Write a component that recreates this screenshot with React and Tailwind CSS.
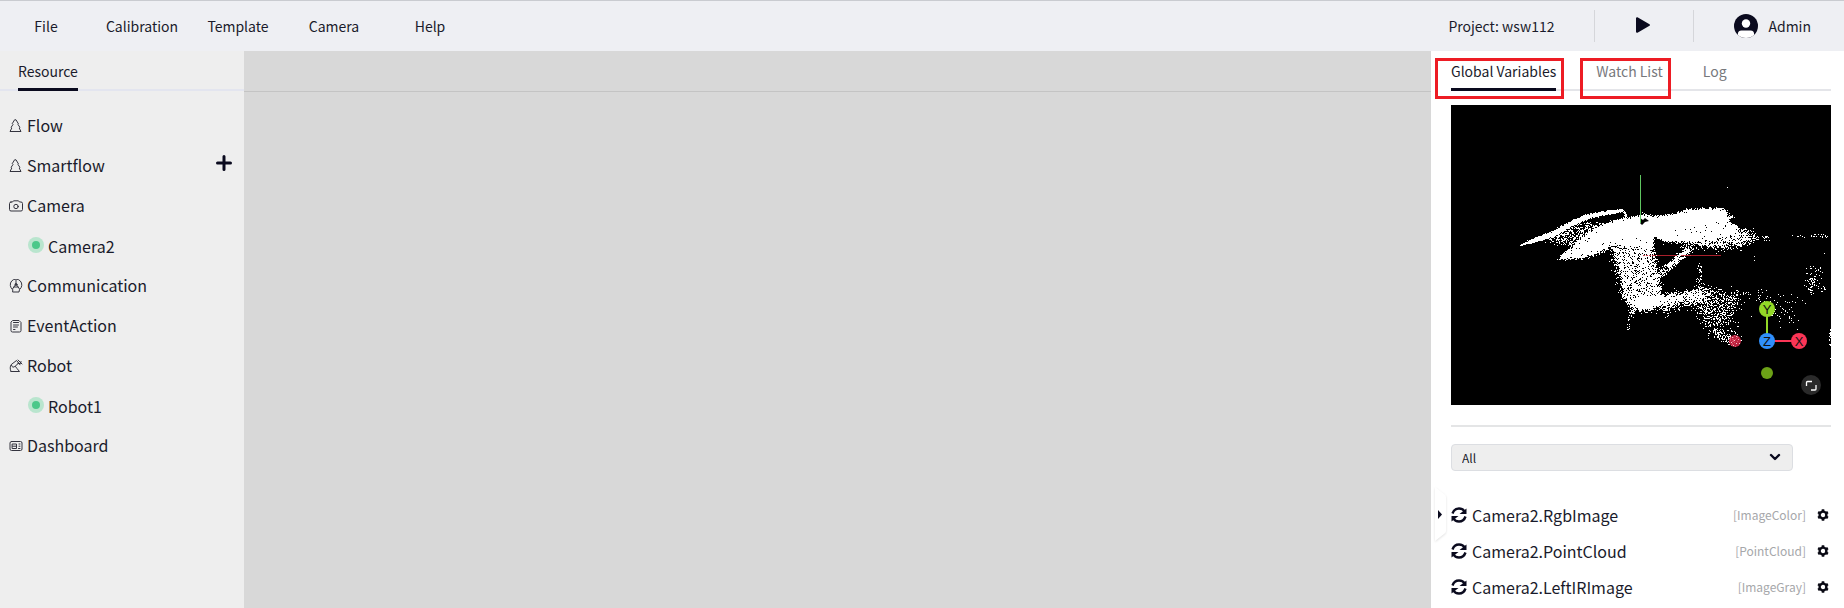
import { useState } from "react";
import clsx from "clsx";

const menuItems = ["File", "Calibration", "Template", "Camera", "Help"];

const resources = [
  { name: "Flow", icon: TreeIcon },
  { name: "Smartflow", icon: TreeIcon, canAdd: true },
  { name: "Camera", icon: CameraIcon, children: ["Camera2"] },
  { name: "Communication", icon: CommunicationIcon },
  { name: "EventAction", icon: ClipboardIcon },
  { name: "Robot", icon: RobotIcon, children: ["Robot1"] },
  { name: "Dashboard", icon: DashboardIcon },
];

const tabs = [
  { name: "Global Variables", marked: true },
  { name: "Watch List", marked: true },
  { name: "Log", marked: false },
];

const variables = [
  { name: "Camera2.RgbImage", type: "ImageColor" },
  { name: "Camera2.PointCloud", type: "PointCloud" },
  { name: "Camera2.LeftIRImage", type: "ImageGray" },
];

// Each region: polygon, share of filled pixels, jitter of the edge in pixels
const cloudRegions = [
  { d: 1, j: 1, p: [[67, 141], [83, 133], [100, 127], [118, 117], [136, 109], [155, 106], [171, 104], [173, 107], [155, 110], [138, 114], [122, 121], [104, 131], [86, 137], [70, 141]] },
  { d: 0.8, j: 1, p: [[170, 105], [173, 105], [177, 112], [174, 112]] },
  { d: 0.45, j: 5, p: [[90, 134], [106, 128], [128, 118], [150, 117], [145, 128], [125, 140], [112, 139]] },
  { d: 0.97, j: 2, p: [[106, 154], [116, 145], [130, 133], [146, 122], [164, 115], [180, 112], [190, 110], [204, 111], [222, 109], [238, 104], [254, 103], [271, 103], [279, 108], [276, 111], [284, 110], [277, 117], [287, 121], [287, 129], [260, 134], [236, 137], [214, 136], [203, 132], [202, 142], [160, 141], [146, 148], [128, 153]] },
  { d: 1, j: 1, p: [[150, 123], [180, 114], [222, 112], [254, 106], [270, 106], [274, 116], [240, 122], [190, 132], [150, 138], [130, 146]] },
  { d: 0.72, j: 5, p: [[205, 128], [240, 131], [285, 124], [298, 126], [301, 133], [290, 139], [268, 142], [240, 138], [214, 137]] },
  { d: 0.35, j: 7, p: [[230, 134], [300, 128], [306, 134], [296, 141], [270, 144], [240, 140]] },
  { d: 0.6, j: 3, p: [[112, 150], [160, 141], [158, 146], [144, 150], [128, 154], [112, 155]] },
  { d: 0.83, j: 4, p: [[161, 141], [203, 138], [205, 158], [209, 176], [211, 195], [180, 200], [172, 192], [168, 168]] },
  { d: 0.97, j: 4, p: [[178, 192], [206, 190], [232, 189], [252, 186], [254, 191], [234, 194], [208, 201], [196, 205], [183, 203]] },
  { d: 0.6, j: 6, p: [[176, 196], [250, 185], [260, 190], [256, 197], [222, 204], [184, 206]] },
  { d: 0.76, j: 2, p: [[205, 169], [218, 158], [232, 144], [240, 143], [238, 149], [224, 161], [210, 173]] },
  { d: 0.4, j: 3, p: [[231, 140], [243, 140], [241, 148], [232, 150]] },
  { d: 0.33, j: 9, p: [[236, 190], [262, 186], [286, 188], [288, 198], [276, 214], [262, 218], [246, 208]] },
  { d: 0.17, j: 9, p: [[246, 204], [276, 200], [284, 222], [286, 236], [272, 236], [254, 222]] },
  { d: 0.4, j: 4, p: [[258, 222], [268, 224], [288, 234], [284, 240], [264, 232]] },
  { d: 0.35, j: 3, p: [[246, 172], [252, 172], [252, 188], [245, 188]] },
  { d: 0.25, j: 2, p: [[246, 157], [250, 157], [251, 174], [247, 174]] },
  { d: 0.5, j: 3, p: [[178, 203], [186, 203], [180, 216], [177, 216]] },
  { d: 0.4, j: 1, p: [[177, 214], [180, 214], [178, 225], [176, 225]] },
  { d: 0.25, j: 3, p: [[212, 203], [220, 203], [218, 211], [213, 211]] },
  { d: 0.26, j: 2, p: [[300, 130], [322, 131], [321, 135], [300, 135]] },
  { d: 0.2, j: 1, p: [[341, 130], [354, 129], [354, 133], [341, 133]] },
  { d: 0.28, j: 1, p: [[359, 129], [377, 130], [377, 133], [360, 132]] },
  { d: 0.14, j: 5, p: [[355, 160], [373, 162], [368, 174], [362, 190], [356, 182]] },
  { d: 0.3, j: 3, p: [[357, 174], [364, 174], [363, 188], [359, 190]] },
  { d: 0.22, j: 3, p: [[369, 181], [376, 182], [374, 189], [370, 188]] },
  { d: 0.06, j: 8, p: [[280, 186], [330, 186], [345, 200], [346, 216], [322, 224], [318, 200], [290, 196]] },
  { d: 0.02, j: 5, p: [[340, 192], [362, 190], [350, 222], [322, 226]] },
  { d: 0.4, j: 0, p: [[378, 224], [380, 224], [380, 241], [378, 241]] },
  { d: 0.15, j: 6, p: [[156, 140], [168, 142], [172, 190], [168, 190]] },
];

const straySpots = [[276, 82], [303, 151], [303, 155], [373, 148], [379, 253], [300, 211], [297, 187], [189, 106], [191, 107], [193, 108]];

function isInside(points, x, y) {
  let inside = false;
  for (let i = 0, k = points.length - 1; i < points.length; k = i++) {
    const [xi, yi] = points[i];
    const [xk, yk] = points[k];
    if (yi > y !== yk > y && x < ((xk - xi) * (y - yi)) / (yk - yi) + xi) {
      inside = !inside;
    }
  }
  return inside;
}

function buildCloud() {
  let seed = 20231;
  const random = () => {
    seed = (seed * 1664525 + 1013904223) % 4294967296;
    return seed / 4294967296;
  };
  const spots = new Set(straySpots.map(([x, y]) => y * 380 + x));

  cloudRegions.forEach(({ d, j, p }) => {
    const xs = p.map((point) => point[0]);
    const ys = p.map((point) => point[1]);
    const right = Math.min(379, Math.max(...xs) + j);
    for (let y = Math.min(...ys) - j; y <= Math.max(...ys) + j; y++) {
      for (let x = Math.min(...xs) - j; x <= right; x++) {
        const px = x + 0.5 + (random() + random() - 1) * j;
        const py = y + 0.5 + (random() + random() - 1) * j;
        if (random() < d && isInside(p, px, py)) spots.add(y * 380 + x);
      }
    }
  });

  return [...spots]
    .map((spot) => `M${spot % 380} ${Math.floor(spot / 380)}h1v1h-1z`)
    .join("");
}

const cloudPath = buildCloud();

function LineIcon({ children }) {
  return (
    <svg viewBox="0 0 14 14" className="mt-0.5 h-3.5 w-3.5 shrink-0" fill="none" stroke="#34343f" strokeWidth="1" strokeLinecap="round" strokeLinejoin="round" aria-hidden="true">
      {children}
    </svg>
  );
}

function TreeIcon() {
  return (
    <LineIcon>
      <path d="M6 .8h1L9.500 5 9 5.500l2 3-.8.500L12 12.500H1L2.800 9 2 8.500l2-3L3.500 5z" />
    </LineIcon>
  );
}

function CameraIcon() {
  return (
    <LineIcon>
      <path d="M2 3h1.500l1-1.200h5l1 1.200H12q1.500 0 1.500 1.500v6q0 1.500-1.500 1.500H2Q.5 12 .5 10.500v-6Q.5 3 2 3z" />
      <circle cx="7" cy="7.500" r="2.200" />
    </LineIcon>
  );
}

function CommunicationIcon() {
  return (
    <LineIcon>
      <path d="M3.500 10.500a5.800 5.800 0 1 1 7 0l-.5 2.500H4z" />
      <path d="M7 1v4M7 5 3.500 10M7 5l3.500 5M5 8h4" />
      <circle cx="7" cy="5.500" r="1" />
    </LineIcon>
  );
}

function ClipboardIcon() {
  return (
    <LineIcon>
      <path d="M4 1.500h6L12 3.500v8q0 1.500-1.500 1.500h-7Q2 13 2 11.500v-8zM4.500 3.500h5M4.500 6h5M4.500 8h4M4.500 10.500h1.500" />
    </LineIcon>
  );
}

function RobotIcon() {
  return (
    <LineIcon>
      <path d="M2 12.500h8.500L8 9.500 6.200 7.200l3-2.700M2 12.500C.9 10 .9 7.500 2.300 5.500L7.500 1.500l2 2.300M2.500 6a2 2 0 0 0 3.700 1.200M9 1l4 4M9.500 3.800l1.500 2M9 4.500h2.500L12 2.500" />
    </LineIcon>
  );
}

function DashboardIcon() {
  return (
    <LineIcon>
      <rect x="1" y="2.500" width="12" height="9" rx="1.500" />
      <path d="M3.500 5h4v4.500h-4zM3.500 7.200h4M10 5h1M10 7.200h1M9.500 9.500H11" />
    </LineIcon>
  );
}

function StatusDot() {
  return (
    <span className="flex h-4 w-4 shrink-0 items-center justify-center rounded-full bg-[#b9e5ce]">
      <span className="h-2 w-2 rounded-full bg-[#4bc88a]" />
    </span>
  );
}

function RefreshIcon() {
  return (
    <svg viewBox="0 0 16 16" className="h-4 w-4" aria-hidden="true">
      <path d="M1.500 6.500C2.500 3.500 5 1.500 8 1.500c2.500 0 4.500 1 5.500 3M14.500 9.500c-1 3-3.500 5-6.500 5-2.500 0-4.500-1-5.500-3" fill="none" stroke="#0a0a1e" strokeWidth="2.400" />
      <path d="M15.500 1.500V7H8.500zM.5 14.500V9h7z" fill="#0a0a1e" />
    </svg>
  );
}

function GearIcon() {
  return (
    <svg viewBox="0 0 12 12" className="h-3 w-3" aria-hidden="true">
      <circle cx="6" cy="6" r="3.400" fill="none" stroke="#0a0a14" strokeWidth="2.400" />
      <path d="M6 .3v2M6 9.700v2M1.100 3.200l1.700 1M9.200 7.800l1.700 1M1.100 8.800l1.700-1M9.200 4.200l1.700-1" stroke="#0a0a14" strokeWidth="2.600" />
    </svg>
  );
}

function Header() {
  return (
    <header className="flex h-[51px] shrink-0 items-center justify-between border-t border-[#c9cbd0] bg-[#eeeff3] text-sm">
      <nav className="-ml-0.5 flex">
        {menuItems.map((item) => (
          <button key={item} type="button" className="w-24 text-center">
            {item}
          </button>
        ))}
      </nav>

      <div className="flex items-center pr-[33px]">
        <span>Project: wsw112</span>
        <div className="ml-10 flex h-8 w-[100px] items-center justify-center border-x border-[#d5d6da]">
          <button type="button" aria-label="Run" className="pr-0.5 pb-0.5">
            <svg viewBox="0 0 16 18" className="h-[18px] w-4" aria-hidden="true">
              <path d="M2 2.200v13.600L14 9z" fill="#0a0a1e" stroke="#0a0a1e" strokeWidth="2" strokeLinejoin="round" />
            </svg>
          </button>
        </div>
        <button type="button" className="ml-10 flex items-center gap-2.5">
          <svg viewBox="0 0 24 24" className="h-6 w-6" aria-hidden="true">
            <circle cx="12" cy="12" r="12" fill="#0a0a1e" />
            <circle cx="12" cy="9.500" r="4.200" fill="#fff" />
            <path d="M3.800 20.800c0-3 1.200-4.300 3.700-4.300h9c2.500 0 3.700 1.300 3.700 4.300A12 12 0 0 1 12 24a12 12 0 0 1-8.200-3.200z" fill="#fff" />
          </svg>
          Admin
        </button>
      </div>
    </header>
  );
}

function Sidebar() {
  return (
    <aside className="w-[244px] shrink-0 bg-[#eee]">
      <div className="flex h-10 border-b-2 border-[#e3e5ef] pl-[18px]">
        <button type="button" className="h-10 border-b-3 border-[#0a0a1e] pt-0.5 text-sm">
          Resource
        </button>
      </div>

      <ul className="pt-3.5 text-base">
        {resources.map(({ name, icon: Icon, canAdd, children }) => (
          <li key={name}>
            <div className="flex h-10 items-center pr-3 pl-[9px]">
              <Icon />
              <span className="ml-1">{name}</span>
              {canAdd && (
                <button type="button" aria-label={`Add ${name}`} className="mb-1 ml-auto">
                  <svg viewBox="0 0 16 16" className="h-4 w-4" aria-hidden="true">
                    <path d="M8 1.500v13M1.500 8h13" stroke="#0a0a1e" strokeWidth="3" strokeLinecap="round" />
                  </svg>
                </button>
              )}
            </div>
            {children?.map((child) => (
              <div key={child} className="flex h-10 items-center gap-1 pl-7">
                <StatusDot />
                <span className="pt-0.5">{child}</span>
              </div>
            ))}
          </li>
        ))}
      </ul>
    </aside>
  );
}

function AxisBall({ x, y, color, label }) {
  return (
    <>
      <circle cx={x} cy={y} r="8" fill={color} />
      <text x={x} y={y + 5} textAnchor="middle" className="font-['Liberation_Sans'] text-[13px]" fill="#111">
        {label}
      </text>
    </>
  );
}

function PointCloudView() {
  return (
    <div className="relative mt-3.5 bg-black">
      <svg viewBox="0 0 380 300" className="block w-full" role="img" aria-label="Point cloud">
        <path d="M203 150.500h67" stroke="#a8202c" />
        <path d={cloudPath} fill="#fff" shapeRendering="crispEdges" />
        <path d="M189 118v-5l3 2 2-2 4 3-4 1-3 3z" fill="#000" />
        <path d="M189.500 70v48" stroke="#5fc660" />
        <path d="M192 150.500h12M230 150.500h10" stroke="#c8434d" strokeDasharray="2 1" />
        <circle cx="284" cy="236" r="6" fill="#dc2b4b" fillOpacity="0.850" />
        <path d="M281 232h1v1h-1zM285 231h1v1h-1zM283 235h1v1h-1zM287 234h1v1h-1zM280 237h1v1h-1zM285 238h1v1h-1zM282 240h1v1h-1zM288 238h1v1h-1z" fill="#f3c3cc" />
        <circle cx="316" cy="268" r="6" fill="#6ca117" />
        <path d="M316 204v32" stroke="#93d827" strokeWidth="2" />
        <path d="M316 236h32" stroke="#fb3556" strokeWidth="2" />
        <AxisBall x={316} y={204} color="#93d827" label="Y" />
        <AxisBall x={348} y={236} color="#fb3556" label="X" />
        <AxisBall x={316} y={236} color="#2f8ffb" label="Z" />
      </svg>
      <button type="button" aria-label="Fullscreen" className="absolute right-2.5 bottom-2.5 flex h-5 w-5 items-center justify-center rounded-full bg-[#2a2a2a]">
        <svg viewBox="0 0 12 12" className="h-3 w-3" aria-hidden="true">
          <path d="M1.500 7V3.500q0-1 1-1H7M11 6v4q0 1-1 1H6" fill="none" stroke="#fff" strokeWidth="1.300" />
        </svg>
      </button>
    </div>
  );
}

function VariablePanel() {
  const [activeTab, setActiveTab] = useState("Global Variables");
  const [filter, setFilter] = useState("All");

  return (
    <aside className="relative w-[413px] shrink-0 bg-white pr-[13px] pl-5">
      <div className="flex h-10 gap-10 border-b-2 border-[#e4e5e9]">
        {tabs.map(({ name, marked }) => (
          <button
            key={name}
            type="button"
            onClick={() => setActiveTab(name)}
            className={clsx(
              "relative h-10 border-b-3 pt-0.5 text-sm",
              activeTab === name ? "border-[#0a0a1e]" : "border-transparent text-[#77787c]"
            )}
          >
            {name}
            {marked && (
              <span className="absolute top-[7px] -right-2 -left-4 h-[41px] border-3 border-[#ed1c24]" />
            )}
          </button>
        ))}
      </div>

      <PointCloudView />

      <hr className="mt-5 border-t-2 border-[#e4e5e6]" />

      <div className="relative mt-[17px] w-[342px]">
        <select
          aria-label="Filter"
          value={filter}
          onChange={(e) => setFilter(e.target.value)}
          className="block h-[27px] w-full appearance-none rounded border border-[#dcdee2] bg-[#eee] px-2.5 text-xs"
        >
          <option>All</option>
          <option>ImageColor</option>
          <option>PointCloud</option>
          <option>ImageGray</option>
        </select>
        <svg viewBox="0 0 12 8" className="pointer-events-none absolute top-[9px] right-3 h-2 w-3" aria-hidden="true">
          <path d="M2 2l4 4 4-4" fill="none" stroke="#0a0a1e" strokeWidth="2.400" strokeLinecap="round" strokeLinejoin="round" />
        </svg>
      </div>

      <ul className="mt-[26px]">
        {variables.map(({ name, type }) => (
          <li key={name} className="flex h-9 items-center">
            <button type="button" aria-label={`Refresh ${name}`} className="mr-[5px]">
              <RefreshIcon />
            </button>
            <span className="text-base">{name}</span>
            <span className="ml-auto text-xs text-[#a6a7aa]">[{type}]</span>
            <button type="button" aria-label={`Settings of ${name}`} className="mr-0.5 ml-[11px]">
              <GearIcon />
            </button>
          </li>
        ))}
      </ul>

      <button type="button" aria-label="Collapse panel" className="absolute top-[436px] left-1 drop-shadow-[0_1px_1px_rgba(0,0,0,0.12)]">
        <svg viewBox="0 0 11 54" className="h-[54px] w-[11px]" aria-hidden="true">
          <path d="M0 0l9 7q2 1 2 3v34q0 2-2 3l-9 7z" fill="#fff" />
          <path d="M3 23v9l4-4.500z" fill="#0a0a1e" />
        </svg>
      </button>
    </aside>
  );
}

export default function App() {
  return (
    <div className="flex h-screen flex-col overflow-hidden font-['Noto_Sans_CJK_SC',sans-serif] text-[#1a1b2b]">
      <Header />
      <div className="flex min-h-0 flex-1">
        <Sidebar />
        <main className="min-w-0 flex-1 bg-[#d8d8d8]">
          <div className="h-[41px] border-b border-[#c4c4c4]" />
        </main>
        <VariablePanel />
      </div>
    </div>
  );
}
